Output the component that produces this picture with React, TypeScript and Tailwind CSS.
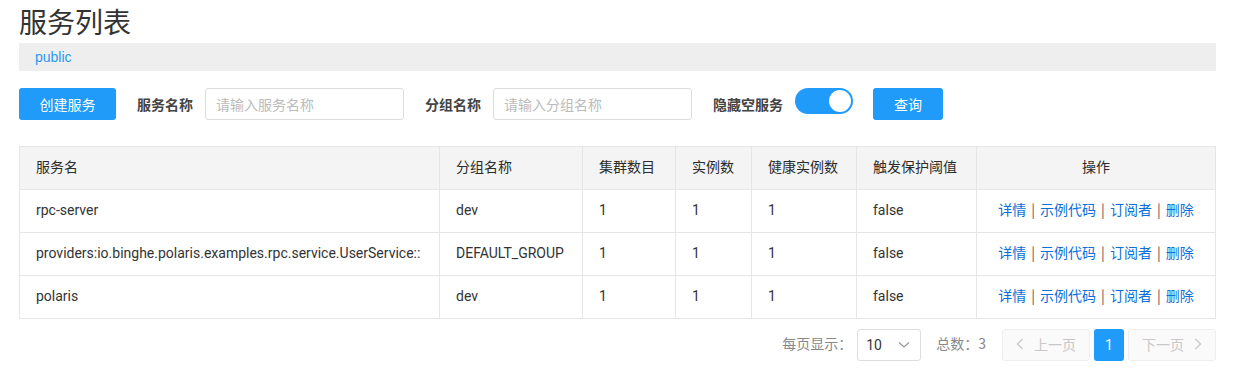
import React from "react";

const rows = [
  { name: "rpc-server", group: "dev" },
  { name: "providers:io.binghe.polaris.examples.rpc.service.UserService::", group: "DEFAULT_GROUP" },
  { name: "polaris", group: "dev" },
];

const cols = [
  { label: "服务名", w: "w-[420px]" },
  { label: "分组名称", w: "w-[143px]" },
  { label: "集群数目", w: "w-[93px]" },
  { label: "实例数", w: "w-[76px]" },
  { label: "健康实例数", w: "w-[105px]" },
  { label: "触发保护阈值", w: "w-[120px]" },
  { label: "操作", w: "w-[238px]" },
];

export default function App() {
  const font = "font-['Roboto','Noto_Sans_CJK_SC',sans-serif]";
  return (
    <div className={`w-[1238px] h-[371px] bg-white px-[19px] ${font} text-[#333]`}>
      <div className="w-[1197px]">
        <div className="h-[43px] leading-[42px] text-[28px] text-[#333] font-['Noto_Sans_CJK_SC',sans-serif]">服务列表</div>
        <div className="h-[28px] bg-[#eeeeee] pl-[16px] leading-[28px] text-[14px] text-[#2b9af3] font-['Liberation_Sans','Noto_Sans_CJK_SC',sans-serif]">public</div>

        <div className="mt-[17px] flex items-start h-[32px] text-[14px]">
          <button className="w-[97px] h-[32px] rounded-[3px] bg-[#209bfa] text-white text-[14px] font-['Noto_Sans_CJK_SC',sans-serif]">创建服务</button>
          <span className="ml-[21px] leading-[32px] font-bold text-[#444] font-['Noto_Sans_CJK_SC',sans-serif]">服务名称</span>
          <div className="ml-[12px] w-[199px] h-[32px] border border-[#dddddd] rounded-[3px] pl-[10px] leading-[30px] text-[#bbbbbb] font-['Noto_Sans_CJK_SC',sans-serif]">请输入服务名称</div>
          <span className="ml-[21px] leading-[32px] font-bold text-[#444] font-['Noto_Sans_CJK_SC',sans-serif]">分组名称</span>
          <div className="ml-[12px] w-[199px] h-[32px] border border-[#dddddd] rounded-[3px] pl-[10px] leading-[30px] text-[#bbbbbb] font-['Noto_Sans_CJK_SC',sans-serif]">请输入分组名称</div>
          <span className="ml-[21px] leading-[32px] font-bold text-[#444] font-['Noto_Sans_CJK_SC',sans-serif]">隐藏空服务</span>
          <div className="ml-[12px] w-[58px] h-[26px] rounded-full bg-[#209bfa] flex items-center justify-end pr-[2px]">
            <div className="w-[22px] h-[22px] rounded-full bg-white" />
          </div>
          <button className="ml-[20px] w-[70px] h-[32px] rounded-[3px] bg-[#209bfa] text-white text-[14px] font-['Noto_Sans_CJK_SC',sans-serif]">查询</button>
        </div>

        <div className="mt-[26px] border border-[#e6e6e6]">
          <div className="flex h-[42px] bg-[#f4f4f4] text-[14px] text-[#2b2b2b] font-['Noto_Sans_CJK_SC',sans-serif]">
            {cols.map((c, i) => (
              <div
                key={i}
                className={`${c.w} flex items-center pb-[3px] ${i === 6 ? "justify-center" : "pl-[16px]"} ${i < 6 ? "border-r border-[#e6e6e6]" : ""}`}
              >
                {c.label}
              </div>
            ))}
          </div>
          {rows.map((r, ri) => (
            <div key={ri} className="flex h-[43px] border-t border-[#e6e6e6] text-[14px]">
              {[r.name, r.group, "1", "1", "1", "false"].map((v, i) => (
                <div key={i} className={`${cols[i].w} flex items-center pb-[2px] pl-[16px] border-r border-[#e6e6e6] whitespace-nowrap`}>
                  {v}
                </div>
              ))}
              <div className="w-[238px] flex items-center justify-center pb-[3px] text-[#0b6fd8] font-['Noto_Sans_CJK_SC',sans-serif]">
                <span>详情</span>
                <span className="mx-[5px] text-[#555]">|</span>
                <span>示例代码</span>
                <span className="mx-[5px] text-[#555]">|</span>
                <span>订阅者</span>
                <span className="mx-[5px] text-[#555]">|</span>
                <span>删除</span>
              </div>
            </div>
          ))}
        </div>

        <div className="mt-[10px] flex items-center justify-end h-[32px] text-[14px] text-[#888] font-['Noto_Sans_CJK_SC',sans-serif]">
          <span className="pb-[3px]">每页显示：</span>
          <div className="ml-[5px] w-[64px] h-[32px] border border-[#dddddd] rounded-[3px] flex items-center pl-[8px] pr-[10px] justify-between text-[#333] font-['Roboto',sans-serif]">
            <span>10</span>
            <svg width="12" height="8" viewBox="0 0 12 8" fill="none" stroke="#999" strokeWidth="1.2">
              <path d="M1 1.5 L6 6 L11 1.5" />
            </svg>
          </div>
          <span className="ml-[15px] pb-[3px]">总数：3</span>
          <div className="ml-[16px] w-[88px] h-[32px] border border-[#eeeeee] bg-[#fafafa] rounded-[3px] flex items-center justify-center gap-[10px] text-[#c8c8c8] pb-[2px]">
            <svg width="8" height="12" viewBox="0 0 8 12" fill="none" stroke="#c8c8c8" strokeWidth="1.3">
              <path d="M6.5 1 L1.5 6 L6.5 11" />
            </svg>
            <span>上一页</span>
          </div>
          <div className="ml-[4px] w-[30px] h-[32px] rounded-[3px] bg-[#209bfa] text-white flex items-center justify-center font-['Roboto',sans-serif]">1</div>
          <div className="ml-[4px] w-[88px] h-[32px] border border-[#eeeeee] bg-[#fafafa] rounded-[3px] flex items-center justify-center gap-[10px] text-[#c8c8c8] pb-[2px]">
            <span>下一页</span>
            <svg width="8" height="12" viewBox="0 0 8 12" fill="none" stroke="#c8c8c8" strokeWidth="1.3">
              <path d="M1.5 1 L6.5 6 L1.5 11" />
            </svg>
          </div>
        </div>
      </div>
    </div>
  );
}
